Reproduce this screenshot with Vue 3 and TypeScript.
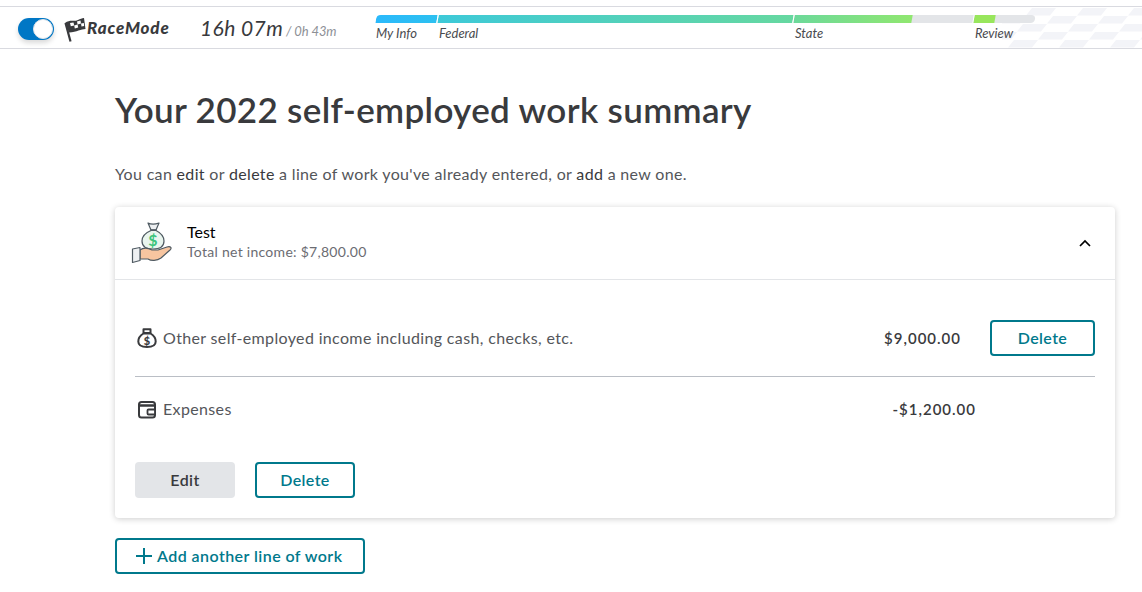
<template>
  <div class="page">
    <header class="race-bar">
      <svg class="checker" width="140" height="41" viewBox="0 0 140 41">
        <g fill="#f3f4f8">
          <path v-for="(t, i) in checkerTiles" :key="i" :d="t" />
        </g>
      </svg>
      <div class="toggle"><span class="knob"></span></div>
      <svg class="flag" width="22" height="25" viewBox="0 0 22 25">
        <path d="M1 6 C6 2 10 5 14 3 C16 2 18 1 20 1 L21.500 12 C17 12 13 15 5 15.500 Z" fill="#393a3d" />
        <path d="M1.500 6 L6.500 24.500" stroke="#393a3d" stroke-width="2.200" fill="none" />
        <path d="M6 6 L9.500 5.500 L10.200 8.500 L6.800 9.200 Z M13 4.500 L16.500 3.500 L17 6.500 L13.600 7.500 Z M10.200 8.500 L13.600 7.500 L14.200 10.500 L10.800 11.500 Z M17 6.500 L19.800 6 L20.200 9 L17.500 9.500 Z" fill="#fff" />
      </svg>
      <span class="brand">RaceMode</span>
      <div class="timer">
        <span class="time">16h 07m</span>
        <span class="sub"> / 0h 43m</span>
      </div>
      <div class="progress">
        <div v-for="s in segments" :key="s.label" class="segment" :style="{ width: s.width + 'px' }">
          <div class="track" :class="s.cls">
            <div class="fill" :style="{ width: s.fill + 'px', background: s.bg }"></div>
          </div>
          <span class="seg-label">{{ s.label }}</span>
        </div>
      </div>
    </header>

    <main class="content">
      <h1>Your 2022 self-employed work summary</h1>
      <p class="intro">You can <span>edit</span> or <span>delete</span> a line of work you've already entered, or <span>add</span> a new one.</p>

      <section class="card">
        <div class="card-head">
          <svg class="bag-hand" width="42" height="42" viewBox="0 0 42 42">
            <path d="M17 1 C20 2.500 24 2.500 28 1 L25 8 H20 Z" fill="#eef0f2" stroke="#4f5a62" stroke-width="1.200" stroke-linejoin="round" />
            <path d="M19.500 8 H25.500" stroke="#4f5a62" stroke-width="1.500" />
            <path d="M20 8.500 C14 11 11 15 11 19 C11 24 15 27 22 27 C29 27 33 24 33 19 C33 15 30 11 25 8.500 Z" fill="#e9f5ee" stroke="#4f5a62" stroke-width="1.200" />
            <text x="22" y="24" text-anchor="middle" class="bag-dollar">$</text>
            <path d="M9 28 C13 25 17 26 21 28 H27 L36 25 C40 24 41 26 39 28 L30 36 C26 39 20 39 17 37 H9 Z" fill="#f7c5a0" stroke="#4f5a62" stroke-width="1.200" stroke-linejoin="round" />
            <path d="M1.500 27 L9 25.500 V38.500 L1.500 40.500 Z" fill="#eef0f2" stroke="#4f5a62" stroke-width="1.200" stroke-linejoin="round" />
          </svg>
          <div class="head-text">
            <div class="job">Test</div>
            <div class="net">Total net income: $7,800.00</div>
          </div>
          <svg class="chevron" width="14" height="9" viewBox="0 0 14 9">
            <path d="M2 7 L7 2 L12 7" fill="none" stroke="#000" stroke-width="1.700" />
          </svg>
        </div>

        <div class="card-body">
          <div class="line income">
            <svg class="line-icon" width="20" height="20" viewBox="0 0 20 20">
              <path d="M6.500 1.200 H13.500 V5 H6.500 Z" fill="none" stroke="#393a3d" stroke-width="2" stroke-linejoin="round" />
              <path d="M6.500 5.500 C3 7.500 1.300 10.500 1.300 13.500 C1.300 17.500 5 19 10 19 C15 19 18.700 17.500 18.700 13.500 C18.700 10.500 17 7.500 13.500 5.500 Z" fill="none" stroke="#393a3d" stroke-width="2" />
              <text x="10" y="16.500" text-anchor="middle" class="small-dollar">$</text>
            </svg>
            <span class="line-name">Other self-employed income including cash, checks, etc.</span>
            <span class="amount">$9,000.00</span>
            <button class="btn outline small">Delete</button>
          </div>
          <div class="divider"></div>
          <div class="line expenses">
            <svg class="line-icon" width="20" height="20" viewBox="0 0 20 20">
              <rect x="2" y="2" width="16" height="15.500" rx="2.500" fill="none" stroke="#393a3d" stroke-width="2" />
              <path d="M2 5.500 H18" stroke="#393a3d" stroke-width="2.500" />
              <rect x="10.500" y="9.500" width="7.500" height="5" rx="1" fill="#fff" stroke="#393a3d" stroke-width="1.800" />
            </svg>
            <span class="line-name">Expenses</span>
            <span class="amount neg">-$1,200.00</span>
          </div>
          <div class="actions">
            <button class="btn grey">Edit</button>
            <button class="btn outline">Delete</button>
          </div>
        </div>
      </section>

      <button class="btn outline add">
        <svg width="18" height="18" viewBox="0 0 18 18">
          <path d="M9 1 V17 M1 9 H17" stroke="#00798c" stroke-width="2" fill="none" />
        </svg>
        <span class="add-label">Add another line of work</span>
      </button>
    </main>
  </div>
</template>

<script setup lang="ts">
interface Segment {
  label: string
  width: number
  fill: number
  bg: string
  cls?: string
}

const segments: Segment[] = [
  { label: 'My Info', width: 62, fill: 61, bg: 'linear-gradient(90deg, #2bb9fb, #2cc0f0)' },
  { label: 'Federal', width: 356, fill: 355, bg: 'linear-gradient(90deg, #3dc9d8, #66d8a0)' },
  { label: 'State', width: 180, fill: 118, bg: 'linear-gradient(90deg, #6cd99a, #90e770)' },
  { label: 'Review', width: 62, fill: 21, bg: '#98e65c', cls: 'last' }
]

// slanted tiles behind the right end of the bar
const checkerTiles: string[] = []
for (let row = 0; row < 5; row++) {
  for (let k = -1; k < 6; k++) {
    const x = 75 - 30 * row + 51 * k
    const y = 1 + row * 8
    checkerTiles.push(`M${x + 6} ${y} H${x + 30} L${x + 24} ${y + 7.5} H${x} Z`)
  }
}
</script>

<style>
body {
  margin: 0;
  background: #fff;
}
</style>

<style scoped>
.page {
  width: 1142px;
  height: 592px;
  overflow: hidden;
  background: #fff;
  font-family: Lato, "Open Sans", sans-serif;
  color: #393a3d;
}

.race-bar {
  position: relative;
  box-sizing: border-box;
  margin-top: 6px;
  height: 43px;
  border-top: 1px solid #d9dae0;
  border-bottom: 1px solid #d9dae0;
  display: flex;
  align-items: flex-start;
  padding-left: 18px;
  overflow: hidden;
}

.checker {
  position: absolute;
  right: 0;
  top: 0;
}

.toggle {
  position: relative;
  margin-top: 11px;
  width: 36px;
  height: 22px;
  border-radius: 11px;
  background: #0077c5;
  box-shadow: 0 3px 5px rgba(0, 0, 0, 0.15);
}

.knob {
  position: absolute;
  right: 1px;
  top: 1px;
  width: 18px;
  height: 18px;
  border-radius: 50%;
  background: #fff;
  border: 1px solid #e4e6ea;
}

.flag {
  margin: 10px 0 0 10px;
}

.brand {
  margin: 12px 0 0 1px;
  width: 82px;
  font-size: 17px;
  font-weight: 900;
  font-style: italic;
  letter-spacing: 0.85px;
  line-height: 18px;
  color: #393a3d;
  position: relative;
}

.timer {
  margin: 9px 0 0 31px;
  width: 176px;
  font-style: italic;
  white-space: nowrap;
  line-height: 24px;
}

.time {
  font-size: 21px;
  letter-spacing: 0.4px;
}

.sub {
  font-size: 13px;
  color: #8d9096;
  letter-spacing: -0.1px;
}

.progress {
  display: flex;
  position: relative;
}

.segment {
  flex: none;
  margin-top: 8px;
}

.segment + .segment .seg-label {
  padding-left: 1px;
}

.track {
  height: 8px;
  overflow: hidden;
  background: #e3e5e8;
  transform: skewX(-10deg);
  margin-right: 1px;
}

.track.last {
  border-radius: 0 4px 4px 0;
}

.segment:first-child .track {
  border-radius: 4px 0 0 0;
}

.fill {
  height: 100%;
}

.seg-label {
  display: block;
  margin-top: 2px;
  font-size: 13px;
  line-height: 16px;
  font-style: italic;
  color: #4a4b4f;
}

.content {
  padding-left: 115px;
  width: 1000px;
}

h1 {
  margin: 38px 0 0;
  font-size: 35px;
  line-height: 44px;
  font-weight: 600;
  letter-spacing: 0.33px;
  white-space: nowrap;
}

.intro {
  margin: 31px 0 0;
  font-size: 16px;
  line-height: 24px;
  color: #54565a;
  letter-spacing: 0.33px;
}

.intro span {
  color: #393a3d;
}

.card {
  margin-top: 21px;
  width: 1000px;
  height: 311px;
  box-sizing: border-box;
  border-radius: 4px;
  background: #fff;
  box-shadow: 0 1px 6px rgba(0, 0, 0, 0.2);
}

.card-head {
  box-sizing: border-box;
  height: 73px;
  border-bottom: 1px solid #e3e5e8;
  display: flex;
  align-items: center;
  padding: 0 23px 0 16px;
}

.bag-hand {
  flex: none;
}

.bag-dollar {
  font-size: 16px;
  font-weight: 700;
  fill: #3cc47c;
}

.small-dollar {
  font-size: 11px;
  font-weight: 900;
  fill: #393a3d;
}

.head-text {
  margin-left: 14px;
  flex: 1;
  padding-bottom: 2px;
}

.job {
  font-size: 16px;
  line-height: 20px;
  color: #000;
}

.net {
  font-size: 14px;
  line-height: 20px;
  color: #6b6c72;
  letter-spacing: 0.28px;
}

.card-body {
  padding: 0 20px;
}

.line {
  display: flex;
  align-items: center;
}

.income {
  box-sizing: border-box;
  height: 96px;
  padding-top: 20px;
}

.expenses {
  height: 65px;
}

.line-icon {
  flex: none;
  margin-right: 6px;
  margin-left: 2px;
}

.line-name {
  flex: 1;
  font-size: 16px;
  color: #54565a;
  letter-spacing: 0.35px;
  padding-bottom: 2px;
}

.amount {
  font-size: 15px;
  font-weight: 600;
  letter-spacing: 1px;
}

.income .amount {
  margin-right: 29px;
}

.neg {
  margin-right: 119px;
  padding-bottom: 2px;
}

.divider {
  height: 1px;
  background: #babec5;
}

.actions {
  display: flex;
  gap: 20px;
  margin-top: 20px;
}

.btn {
  box-sizing: border-box;
  width: 100px;
  height: 36px;
  border-radius: 4px;
  font-family: inherit;
  font-size: 16px;
  font-weight: 600;
  letter-spacing: 0.4px;
  padding: 0 0 2px;
  cursor: pointer;
}

.outline {
  background: #fff;
  border: 2px solid #00798c;
  color: #00798c;
}

.small {
  width: 105px;
}

.grey {
  background: #e3e5e8;
  border: none;
  color: #393a3d;
}

.add {
  margin-top: 20px;
  width: 250px;
  padding: 0 0 0 18px;
  display: flex;
  align-items: center;
  gap: 4px;
}

.add-label {
  letter-spacing: 0.44px;
  margin-bottom: 2px;
}
</style>
